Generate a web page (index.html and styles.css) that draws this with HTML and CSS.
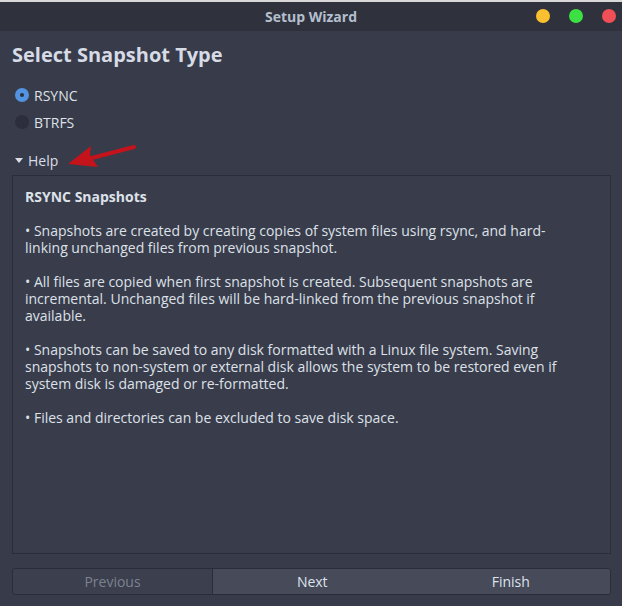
FILE: index.html
```html
<!DOCTYPE html>
<html>
<head>
<meta charset="utf-8">
<link rel="stylesheet" href="styles.css">
</head>
<body>
<div class="window">
  <div class="topstrip"></div>
  <div class="titlebar">
    <span class="title">Setup Wizard</span>
    <div class="dots">
      <span class="dot yellow"></span>
      <span class="dot green"></span>
      <span class="dot red"></span>
    </div>
  </div>
  <div class="content">
    <h1 class="heading">Select Snapshot Type</h1>
    <div class="radios">
      <label class="radio"><span class="circle checked"></span>RSYNC</label>
      <label class="radio"><span class="circle"></span>BTRFS</label>
    </div>
    <div class="help-row">
      <span class="tri"></span>Help
      <svg class="arrow" width="80" height="40" viewBox="0 0 80 40">
        <path d="M70 8 L24 20" stroke="#c4131b" stroke-width="4" stroke-linecap="round" fill="none"/>
        <path d="M4 25 L27 7 L26 16 L34 28 Z" fill="#c4131b"/>
      </svg>
    </div>
    <div class="panel">
      <p class="ptitle">RSYNC Snapshots</p>
      <p>• Snapshots are created by creating copies of system files using rsync, and hard-linking unchanged files from previous snapshot.</p>
      <p>• All files are copied when first snapshot is created. Subsequent snapshots are incremental. Unchanged files will be hard-linked from the previous snapshot if available.</p>
      <p>• Snapshots can be saved to any disk formatted with a Linux file system. Saving snapshots to non-system or external disk allows the system to be restored even if system disk is damaged or re-formatted.</p>
      <p>• Files and directories can be excluded to save disk space.</p>
    </div>
    <div class="buttons">
      <button class="btn disabled">Previous</button>
      <button class="btn">Next</button>
      <button class="btn">Finish</button>
    </div>
  </div>
</div>
</body>
</html>
```
FILE: styles.css
```css
html, body {
  margin: 0;
  padding: 0;
  background: #383b4a;
}
body {
  width: 622px;
  height: 606px;
  overflow: hidden;
  font-family: "Open Sans", "DejaVu Sans", sans-serif;
  color: #d9dde6;
}
.window {
  display: flex;
  flex-direction: column;
  height: 606px;
}
.topstrip {
  height: 2px;
  background: #d8d8d8;
}
.titlebar {
  height: 29px;
  background: #2f323d;
  display: flex;
  align-items: center;
  justify-content: center;
  position: relative;
}
.title {
  font-size: 14px;
  font-weight: bold;
  color: #b4bfcd;
}
.dots {
  position: absolute;
  right: 6px;
  top: 7px;
  display: flex;
  gap: 19px;
}
.dot {
  width: 14px;
  height: 14px;
  border-radius: 50%;
  display: block;
}
.yellow { background: #fbc02f; }
.green { background: #3be043; }
.red { background: #f14f58; }
.content {
  flex: 1;
  background: #383b4a;
  padding: 12px 11px 11px 12px;
  display: flex;
  flex-direction: column;
}
.heading {
  margin: 0;
  font-size: 20px;
  font-weight: bold;
  color: #d6dbe5;
  line-height: 24px;
}
.radios {
  margin-top: 19px;
  display: flex;
  flex-direction: column;
  gap: 9px;
}
.radio {
  display: flex;
  align-items: center;
  font-size: 14px;
  height: 18px;
  color: #dde1e8;
}
.circle {
  width: 14px;
  height: 14px;
  border-radius: 50%;
  background: #2c2f3b;
  margin: 0 5px 0 3px;
  box-sizing: border-box;
}
.circle.checked {
  background: #5294e2;
  position: relative;
}
.circle.checked::after {
  content: "";
  position: absolute;
  left: 5px;
  top: 5px;
  width: 4px;
  height: 4px;
  border-radius: 50%;
  background: #2c2f3b;
}
.help-row {
  margin-top: 20px;
  display: flex;
  align-items: center;
  font-size: 14px;
  height: 18px;
  position: relative;
}
.tri {
  width: 0;
  height: 0;
  border-left: 4px solid transparent;
  border-right: 4px solid transparent;
  border-top: 5px solid #d9dde6;
  margin: 0 5px 0 3px;
}
.arrow {
  position: absolute;
  left: 52px;
  top: -12px;
}
.panel {
  margin-top: 6px;
  flex: 1;
  border: 1px solid #2a2d39;
  background: #393c4b;
  padding: 12px 30px 12px 12px;
  font-size: 14px;
  line-height: 17px;
  color: #dde1e8;
}
.panel p {
  margin: 0 0 17px 0;
}
.panel .ptitle {
  font-weight: bold;
  margin-bottom: 16px;
  line-height: 18px;
}
.buttons {
  margin-top: 14px;
  display: grid;
  grid-template-columns: 200px 1fr 1fr;
  box-sizing: border-box;
  height: 27px;
  border: 1px solid #2a2d39;
  border-radius: 3px;
  overflow: hidden;
}
.btn {
  font-family: inherit;
  font-size: 14px;
  border: none;
  background: #464a59;
  color: #dde3ec;
  padding: 0;
}
.btn.disabled {
  background: #3b3f4e;
  color: #7d8290;
  border-right: 1px solid #2a2d39;
}
```
